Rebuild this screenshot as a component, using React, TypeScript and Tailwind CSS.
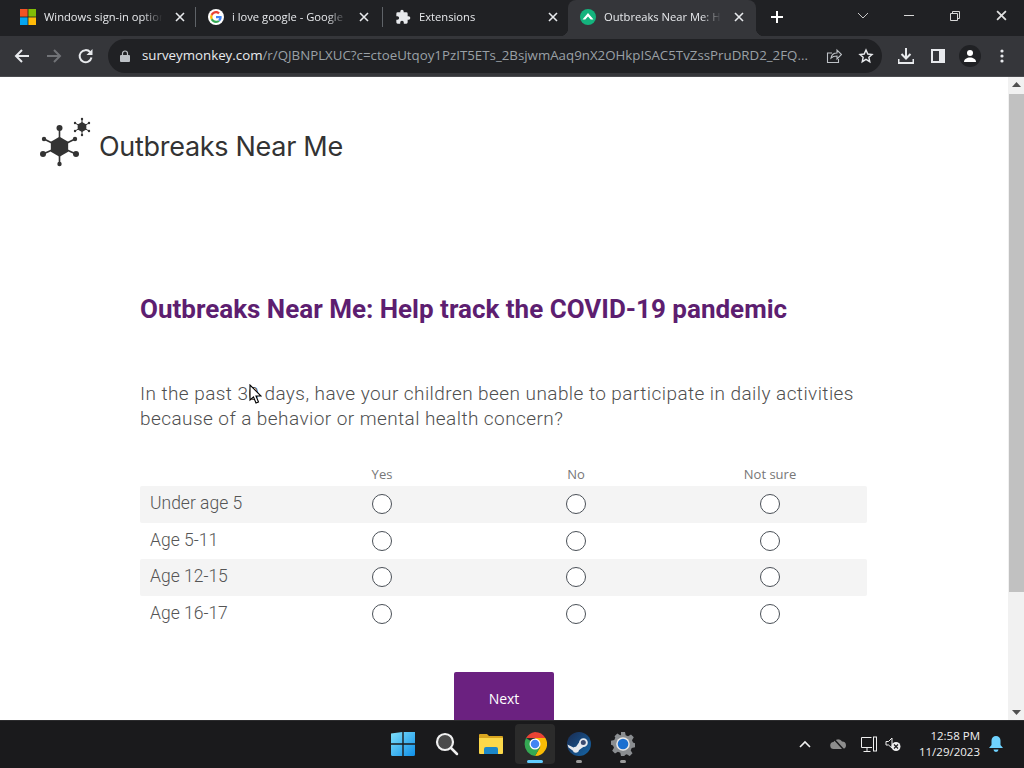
import React from "react";

const X = ({ c = "#e8eaed", s = 10 }: { c?: string; s?: number }) => (
  <svg width={s} height={s} viewBox="0 0 10 10"><path d="M1 1l8 8M9 1l-8 8" stroke={c} strokeWidth="1.6" fill="none" /></svg>
);

const MsLogo = () => (
  <svg width="16" height="16" viewBox="0 0 16 16">
    <rect width="7.6" height="7.6" fill="#f35325" /><rect x="8.4" width="7.6" height="7.6" fill="#81bc06" />
    <rect y="8.4" width="7.6" height="7.6" fill="#05a6f0" /><rect x="8.4" y="8.4" width="7.6" height="7.6" fill="#ffba08" />
  </svg>
);
const GLogo = () => (
  <svg width="16" height="16" viewBox="0 0 48 48">
    <circle cx="24" cy="24" r="24" fill="#fff" />
    <path fill="#4285f4" d="M41 24.5c0-1.300-.1-2.300-.3-3.500H24v6.500h9.700c-.4 2.200-1.700 4-3.500 5.200l5.400 4.200C39 33.800 41 29.600 41 24.500z" />
    <path fill="#34a853" d="M24 42c4.700 0 8.600-1.500 11.500-4.200l-5.400-4.200c-1.500 1-3.500 1.700-6.100 1.700-4.700 0-8.700-3.100-10.100-7.400l-5.600 4.300C11.200 38 17.100 42 24 42z" />
    <path fill="#fbbc05" d="M13.900 27.900a11 11 0 0 1 0-7.800l-5.600-4.300a18 18 0 0 0 0 16.400z" />
    <path fill="#ea4335" d="M24 13c2.600 0 4.800.9 6.600 2.600l4.900-4.900C32.600 7.900 28.700 6 24 6 17.100 6 11.200 10 8.300 15.800l5.600 4.300C15.300 16.100 19.300 13 24 13z" />
  </svg>
);
const Puzzle = () => (
  <svg width="16" height="16" viewBox="0 0 24 24" fill="#e8eaed"><path d="M20.500 11H19V7a2 2 0 0 0-2-2h-4V3.500a2.500 2.500 0 0 0-5 0V5H4a2 2 0 0 0-2 2v3.800h1.500a2.700 2.700 0 0 1 0 5.400H2V20a2 2 0 0 0 2 2h3.800v-1.500a2.700 2.700 0 0 1 5.400 0V22H17a2 2 0 0 0 2-2v-4h1.500a2.500 2.500 0 0 0 0-5z" /></svg>
);
const SmLogo = () => (
  <svg width="16" height="16" viewBox="0 0 16 16">
    <circle cx="8" cy="8" r="8" fill="#14b37d" />
    <path d="M2.500 10.500 8 4l5.500 6.500h-2.800L8 7.500l-2.700 3z" fill="#fff" />
  </svg>
);

function Tab({ icon, title, active, w, tw }: { icon: React.ReactNode; title: string; active?: boolean; w: string; tw: string }) {
  return (
    <div className={`relative ${w} h-[36px] flex items-center shrink-0 pl-[12px] ${active ? "bg-[#35363a] rounded-t-[8px]" : ""}`}>
      {active && <div className="absolute -left-[8px] bottom-0 w-[8px] h-[8px] bg-[radial-gradient(circle_at_0_0,transparent_8px,#35363a_8.5px)]" />}
      {active && <div className="absolute -right-[8px] bottom-0 w-[8px] h-[8px] bg-[radial-gradient(circle_at_100%_0,transparent_8px,#35363a_8.5px)]" />}
      <div className="w-[16px] h-[16px] shrink-0 -mt-[2px]">{icon}</div>
      <div className={`ml-[8px] ${tw} shrink-0 -mt-[2px] overflow-hidden whitespace-nowrap text-[11.2px] leading-[16px] text-[#e8eaed] font-['Open_Sans',sans-serif] [mask-image:linear-gradient(to_right,black_78%,transparent_94%)]`}>{title}</div>
      <div className="ml-[2px] w-[16px] h-[16px] flex items-center justify-center shrink-0 -mt-[2px]"><X /></div>
    </div>
  );
}

const Sep = () => <div className="w-[1px] h-[20px] bg-[#5f6368] shrink-0 -mt-[2px]" />;

const Logo = () => {
  const hub = (cx: number, cy: number, r: number, pts: [number, number, number][]) => (
    <g fill="#333" stroke="#333">
      {pts.map(([x, y, pr], i) => (
        <g key={i}>
          <line x1={cx} y1={cy} x2={x} y2={y} strokeWidth={r > 6 ? 1.6 : 1} />
          <circle cx={x} cy={y} r={pr} stroke="none" />
        </g>
      ))}
      <polygon stroke="none" points={[0, 1, 2, 3, 4, 5].map(i => `${cx + r * Math.sin(i * Math.PI / 3)},${cy - r * Math.cos(i * Math.PI / 3)}`).join(" ")} />
    </g>
  );
  return (
    <svg width="54" height="50" viewBox="0 0 54 50" className="shrink-0">
      {hub(20.500, 29.700, 10, [[20.500, 11, 3], [5, 22, 2.200], [36, 22, 2.200], [4, 37, 3], [37, 37, 3], [20.500, 47, 2.200]])}
      {hub(43, 10, 5, [[43, 2, 1.200], [36, 6, 1.200], [50, 6, 1.200], [36, 14, 1.200], [50, 14, 1.200], [43, 18, 1.200]])}
    </svg>
  );
};

const Radio = () => <div className="w-[20px] h-[20px] rounded-full border border-[#4a5057] bg-white" />;

function Row({ label, gray, h }: { label: string; gray?: boolean; h: string }) {
  return (
    <div className={`flex items-center ${h} ${gray ? "bg-[#f4f4f4] rounded-[2px] pb-[1px]" : ""} text-[#555555] text-[17.5px] font-light font-['Roboto',sans-serif]`}>
      <div className="w-[145px] pl-[10px] -mt-[2px] whitespace-nowrap">{label}</div>
      <div className="w-[194px] flex justify-center"><Radio /></div>
      <div className="w-[194px] flex justify-center"><Radio /></div>
      <div className="w-[194px] flex justify-center"><Radio /></div>
    </div>
  );
}

const WinLogo = () => (
  <svg width="24" height="24" viewBox="0 0 24 24">
    <defs><linearGradient id="w" x1="0" y1="0" x2="1" y2="1"><stop offset="0" stopColor="#7fe0fb" /><stop offset="1" stopColor="#0f8fe8" /></linearGradient></defs>
    <path fill="url(#w)" d="M0 1.500 11.300 0v11.300H0zM12.700 0H24v11.300H12.700zM0 12.700h11.300V24H1.500A1.500 1.500 0 0 1 0 22.500zM12.700 12.700H24v9.800a1.500 1.500 0 0 1-1.500 1.500h-9.800z" />
  </svg>
);
const Search = () => (
  <svg width="24" height="24" viewBox="0 0 24 24"><circle cx="10" cy="10" r="8" fill="#4a4a4a" stroke="#f0f0f0" strokeWidth="2.200" /><path d="M16 16l6 6" stroke="#f0f0f0" strokeWidth="2.500" strokeLinecap="round" /></svg>
);
const Folder = () => (
  <svg width="26" height="22" viewBox="0 0 26 22">
    <path d="M1 2a1 1 0 0 1 1-1h7l2 2h13a1 1 0 0 1 1 1v3H1z" fill="#d9a520" />
    <path d="M1 5h24v15a1 1 0 0 1-1 1H2a1 1 0 0 1-1-1z" fill="#fbd84a" />
    <path d="M6 21v-5a2 2 0 0 1 2-2h10a2 2 0 0 1 2 2v5z" fill="#1b87c9" />
  </svg>
);
const Chrome = () => (
  <svg width="24" height="24" viewBox="0 0 48 48">
    <path d="M24 24 13.600 42 3.200 24a24 24 0 0 1 3-12z" fill="#34a853" />
    <path d="M24 0a24 24 0 0 1 20.800 12H24L6.200 12A24 24 0 0 1 24 0z" fill="#ea4335" />
    <path d="M44.800 12A24 24 0 0 1 24 48l10.400-18-10.400-18z" fill="#fbbc05" />
    <path d="M3.200 24A24 24 0 0 0 24 48l10.400-18H13.600z" fill="#34a853" />
    <circle cx="24" cy="24" r="11" fill="#fff" /><circle cx="24" cy="24" r="8.500" fill="#4285f4" />
  </svg>
);
const Steam = () => (
  <svg width="24" height="24" viewBox="0 0 24 24">
    <defs><linearGradient id="st" x1="0" y1="0" x2="1" y2="1"><stop offset="0" stopColor="#1a2b50" /><stop offset="1" stopColor="#1566a8" /></linearGradient></defs>
    <circle cx="12" cy="12" r="12" fill="url(#st)" />
    <path d="M0.500 12.500l6 3a3.300 3.300 0 0 1 2.500-.8l3-4.200a4.400 4.400 0 1 1 4.300 4.500l-4.200 3a3.300 3.300 0 0 1-6.400.6L1.500 15.500z" fill="#e6e9ee" />
    <circle cx="16.300" cy="10.500" r="2.500" fill="#3a4a70" />
  </svg>
);
const Gear = () => (
  <svg width="24" height="24" viewBox="0 0 24 24">
    <path fill="#8a8d90" d="M10 0h4l.7 3.300 2.400 1 2.900-1.800 2.800 2.800-1.800 2.900 1 2.400 2 .7v4l-3.300.7-1 2.400 1.800 2.900-2.800 2.800-2.900-1.800-2.400 1L14 24h-4l-.7-3.300-2.400-1-2.900 1.800-2.800-2.800L3 15.800l-1-2.400-2-.7v-4l3.300-.7 1-2.400L3.500 4.300 6.300 1.500l2.900 1.800 .8-.3z" />
    <circle cx="12" cy="12" r="6.800" fill="#e8e8e8" /><circle cx="12" cy="12" r="5.300" fill="#1a6fd0" />
  </svg>
);

function TaskIcon({ children, active, dot }: { children: React.ReactNode; active?: boolean; dot?: boolean }) {
  return (
    <div className={`relative w-[40px] h-[40px] flex items-center justify-center rounded-[4px] ${active ? "bg-[#2b2b2b]" : ""}`}>
      {children}
      {active && <div className="absolute bottom-[1px] left-[12px] w-[16px] h-[3px] rounded-full bg-[#60cdff]" />}
      {dot && <div className="absolute bottom-[1px] left-[17px] w-[6px] h-[3px] rounded-full bg-[#9b9b9b]" />}
    </div>
  );
}

export default function App() {
  return (
    <div className="w-[1024px] h-[768px] overflow-hidden flex flex-col bg-white font-['Open_Sans',sans-serif]">
      {/* tab strip */}
      <div className="h-[36px] bg-[#202124] flex items-center shrink-0 relative">
        <div className="w-[8px] shrink-0" />
        <Tab w="w-[187px]" tw="w-[126px]" icon={<MsLogo />} title="Windows sign-in options" />
        <Sep />
        <Tab w="w-[186px]" tw="w-[122px]" icon={<GLogo />} title="i love google - Google Search" />
        <Sep />
        <Tab w="w-[185px]" tw="w-[124px]" icon={<Puzzle />} title="Extensions" />
        <Tab w="w-[188px]" tw="w-[125px]" active icon={<SmLogo />} title="Outbreaks Near Me: Help track" />
        <div className="ml-[13px] w-[16px] h-[16px] -mt-[2px]">
          <svg width="16" height="16" viewBox="0 0 16 16"><path d="M8 2v12M2 8h12" stroke="#fff" strokeWidth="2" /></svg>
        </div>
        <div className="flex-1" />
        <div className="w-[12px] mr-[35px] -mt-[5px]"><svg width="12" height="8" viewBox="0 0 12 8"><path d="M1 1l5 5 5-5" stroke="#c8c8c8" fill="none" /></svg></div>
        <div className="w-[10px] h-[1px] bg-[#d8d8d8] mr-[36px] -mt-[5px]" />
        <div className="mr-[36px] -mt-[5px]"><svg width="10" height="10" viewBox="0 0 10 10"><path d="M.5 2.500h7v7h-7zM2.500 2.500V.5h7v7H7.500" stroke="#d8d8d8" fill="none" /></svg></div>
        <div className="mr-[17px] -mt-[5px]"><X c="#e0e0e0" s={11} /></div>
      </div>
      {/* toolbar */}
      <div className="h-[40px] bg-[#35363a] flex items-center shrink-0 pl-[14px]">
        <svg width="16" height="16" viewBox="0 0 16 16"><path d="M15 8H2M8 2 2 8l6 6" stroke="#e8eaed" strokeWidth="2" fill="none" /></svg>
        <svg className="ml-[16px]" width="16" height="16" viewBox="0 0 16 16"><path d="M1 8h13M8 2l6 6-6 6" stroke="#717377" strokeWidth="2" fill="none" /></svg>
        <svg className="ml-[16px]" width="16" height="16" viewBox="0 0 16 16"><path d="M13.500 9.500a6 6 0 1 1-1.300-5.300" stroke="#e8eaed" strokeWidth="2" fill="none" /><path d="M14.500 1v6h-6z" fill="#e8eaed" /></svg>
        <div className="ml-[14px] w-[774px] h-[34px] rounded-full bg-[#202124] flex items-center pl-[12px] shrink-0">
          <svg width="10" height="12" viewBox="0 0 10 12"><path d="M2.500 5V3.500a2.500 2.500 0 0 1 5 0V5" stroke="#bdc1c6" fill="none" strokeWidth="1.200" /><rect y="5" width="10" height="7" rx="1" fill="#bdc1c6" /></svg>
          <div className="ml-[12px] w-[669px] text-[13.3px] whitespace-nowrap overflow-hidden text-[#9aa0a6] shrink-0"><span className="text-[#e8eaed]">surveymonkey.com</span>/r/QJBNPLXUC?c=ctoeUtqoy1PzIT5ETs_2BsjwmAaq9nX2OHkpISAC5TvZssPruDRD2_2FQ...</div>
          <svg className="ml-[15px] shrink-0" width="16" height="16" viewBox="0 0 16 16"><path d="M6 5H1.500v9.500h11V11M5 10c.5-3 3-5 6-5V2l4.500 4.500L11 11V8C8.500 8 6.500 8.500 5 10z" stroke="#bdc1c6" fill="none" strokeWidth="1.100" /></svg>
          <svg className="ml-[16px] shrink-0" width="16" height="16" viewBox="0 0 24 24"><path d="m12 3 2.700 6 6.300.7-4.700 4.300 1.300 6.500L12 17.200l-5.600 3.300L7.700 14 3 9.700 9.300 9z" stroke="#e8eaed" fill="none" strokeWidth="2.200" /></svg>
        </div>
        <svg className="ml-[16px]" width="16" height="16" viewBox="0 0 16 16"><path d="M8 0v10M3.500 6 8 10.500 12.500 6M0.500 11v4h15v-4" stroke="#e8eaed" strokeWidth="2" fill="none" /></svg>
        <svg className="ml-[17px]" width="14" height="14" viewBox="0 0 14 14"><rect x="1" y="1" width="12" height="12" fill="none" stroke="#e8eaed" strokeWidth="2" /><rect x="8" y="1" width="5" height="12" fill="#e8eaed" /></svg>
        <div className="ml-[14px] w-[22px] h-[22px] rounded-full bg-[#202124] flex items-center justify-center">
          <svg width="14" height="14" viewBox="0 0 14 14" fill="#fff"><circle cx="7" cy="4" r="3" /><path d="M1 13c0-3 3-4.500 6-4.500s6 1.500 6 4.500z" /></svg>
        </div>
        <svg className="ml-[19px]" width="4" height="14" viewBox="0 0 4 14" fill="#e8eaed"><circle cx="2" cy="2" r="1.600" /><circle cx="2" cy="7" r="1.600" /><circle cx="2" cy="12" r="1.600" /></svg>
      </div>
      <div className="h-[1px] bg-[#4a4b4f] shrink-0" />
      {/* page */}
      <div className="h-[643px] shrink-0 flex overflow-hidden">
        <div className="flex-1 relative overflow-hidden">
          <div className="flex items-center pl-[39px] pt-[40px]">
            <Logo />
            <div className="ml-[6px] mt-[9px] text-[27px] leading-[32px] text-[#333333] font-['Inter',sans-serif] tracking-[-0.3px] whitespace-nowrap">Outbreaks Near Me</div>
          </div>
          <div className="ml-[140px] mt-[126px] text-[26px] leading-[32px] font-bold text-[#5d1e70] whitespace-nowrap font-['Roboto',sans-serif]">Outbreaks Near Me: Help track the COVID-19 pandemic</div>
          <div className="ml-[140px] mt-[56px] w-[727px] text-[19px] leading-[25px] text-[#4f4f4f] tracking-[0.43px] font-light font-['Roboto',sans-serif]">In the past 30 days, have your children been unable to participate in daily activities because of a behavior or mental health concern?</div>
          <div className="ml-[140px] mt-[36px] w-[727px]">
            <div className="flex h-[19px] text-[13px] text-[#777777] leading-[15px]">
              <div className="w-[145px]" />
              <div className="w-[194px] text-center">Yes</div>
              <div className="w-[194px] text-center">No</div>
              <div className="w-[194px] text-center">Not sure</div>
            </div>
            <Row label="Under age 5" gray h="h-[37px]" />
            <Row label="Age 5-11" h="h-[36px]" />
            <Row label="Age 12-15" gray h="h-[37px]" />
            <Row label="Age 16-17" h="h-[36px]" />
          </div>
          <div className="ml-[454px] mt-[40px] w-[100px] h-[54px] rounded-[2px] bg-[#6b2180] text-white text-[14px] flex items-center justify-center pb-[2px]">Next</div>
          {/* pointer */}
          <svg className="absolute left-[249px] top-[307px]" width="13" height="20" viewBox="0 0 13 20"><path d="M1 1v15l3.500-3 2.500 6 2.500-1-2.500-6H12z" fill="#fff" stroke="#000" strokeWidth="1.100" /></svg>
        </div>
        <div className="w-[16px] bg-[#f1f1f1] flex flex-col items-center shrink-0">
          <svg className="mt-[5px]" width="9" height="6" viewBox="0 0 9 6"><path d="M4.500 0 9 5H0z" fill="#505050" /></svg>
          <div className="mt-[6px] w-[15px] h-[498px] bg-[#c1c1c1]" />
          <div className="flex-1" />
          <svg className="mb-[5px]" width="9" height="6" viewBox="0 0 9 6"><path d="M4.500 6 9 1H0z" fill="#505050" /></svg>
        </div>
      </div>
      {/* taskbar */}
      <div className="h-[48px] bg-[#1a1a1c] border-t border-[#2c2c2e] pb-[1px] flex items-center shrink-0 relative">
        <div className="w-[383px]" />
        <TaskIcon><WinLogo /></TaskIcon>
        <div className="w-[4px]" />
        <TaskIcon><Search /></TaskIcon>
        <div className="w-[4px]" />
        <TaskIcon><Folder /></TaskIcon>
        <div className="w-[4px]" />
        <TaskIcon active><Chrome /></TaskIcon>
        <div className="w-[4px]" />
        <TaskIcon dot><Steam /></TaskIcon>
        <div className="w-[4px]" />
        <TaskIcon dot><Gear /></TaskIcon>
        <div className="flex-1" />
        <svg className="mr-[19px]" width="12" height="8" viewBox="0 0 12 8"><path d="M1 7l5-5 5 5" stroke="#f0f0f0" strokeWidth="1.600" fill="none" /></svg>
        <svg className="mr-[14px]" width="17" height="12" viewBox="0 0 17 12"><path d="M4 11a3.500 3.500 0 0 1-.5-7A5 5 0 0 1 12 3.500 3.800 3.800 0 0 1 13 11z" fill="#8d8d8d" /><path d="M3 0l11 12" stroke="#1a1a1c" strokeWidth="1.500" /></svg>
        <svg className="mr-[7px]" width="17" height="17" viewBox="0 0 17 17" fill="none" stroke="#efefef"><path d="M11 11.500H.5V1.500h10M6 11.500v4M2.500 15.500h7" /><rect x="12.500" y="1" width="3" height="14" /></svg>
        <svg className="mr-[18px]" width="16" height="16" viewBox="0 0 16 16"><path d="M1 5.500h2.500L7 2v10L3.500 9H1z" fill="none" stroke="#efefef" /><circle cx="11" cy="10.500" r="4.500" fill="#efefef" /><path d="M9 8.500l4 4M13 8.500l-4 4" stroke="#1a1a1c" strokeWidth="1.200" /></svg>
        <div className="text-[11.500px] leading-[16px] text-[#f0f0f0] text-right whitespace-nowrap">
          <div>12:58 PM</div>
          <div>11/29/2023</div>
        </div>
        <svg className="ml-[9px] mr-[21px]" width="14" height="16" viewBox="0 0 14 16" fill="#6fd3ff"><path d="M7 0a4.500 4.500 0 0 1 4.500 4.500V9l2.500 3H0l2.500-3V4.500A4.500 4.500 0 0 1 7 0z" /><path d="M4.500 13.500h5a2.500 2.500 0 0 1-5 0z" /></svg>
      </div>
    </div>
  );
}
